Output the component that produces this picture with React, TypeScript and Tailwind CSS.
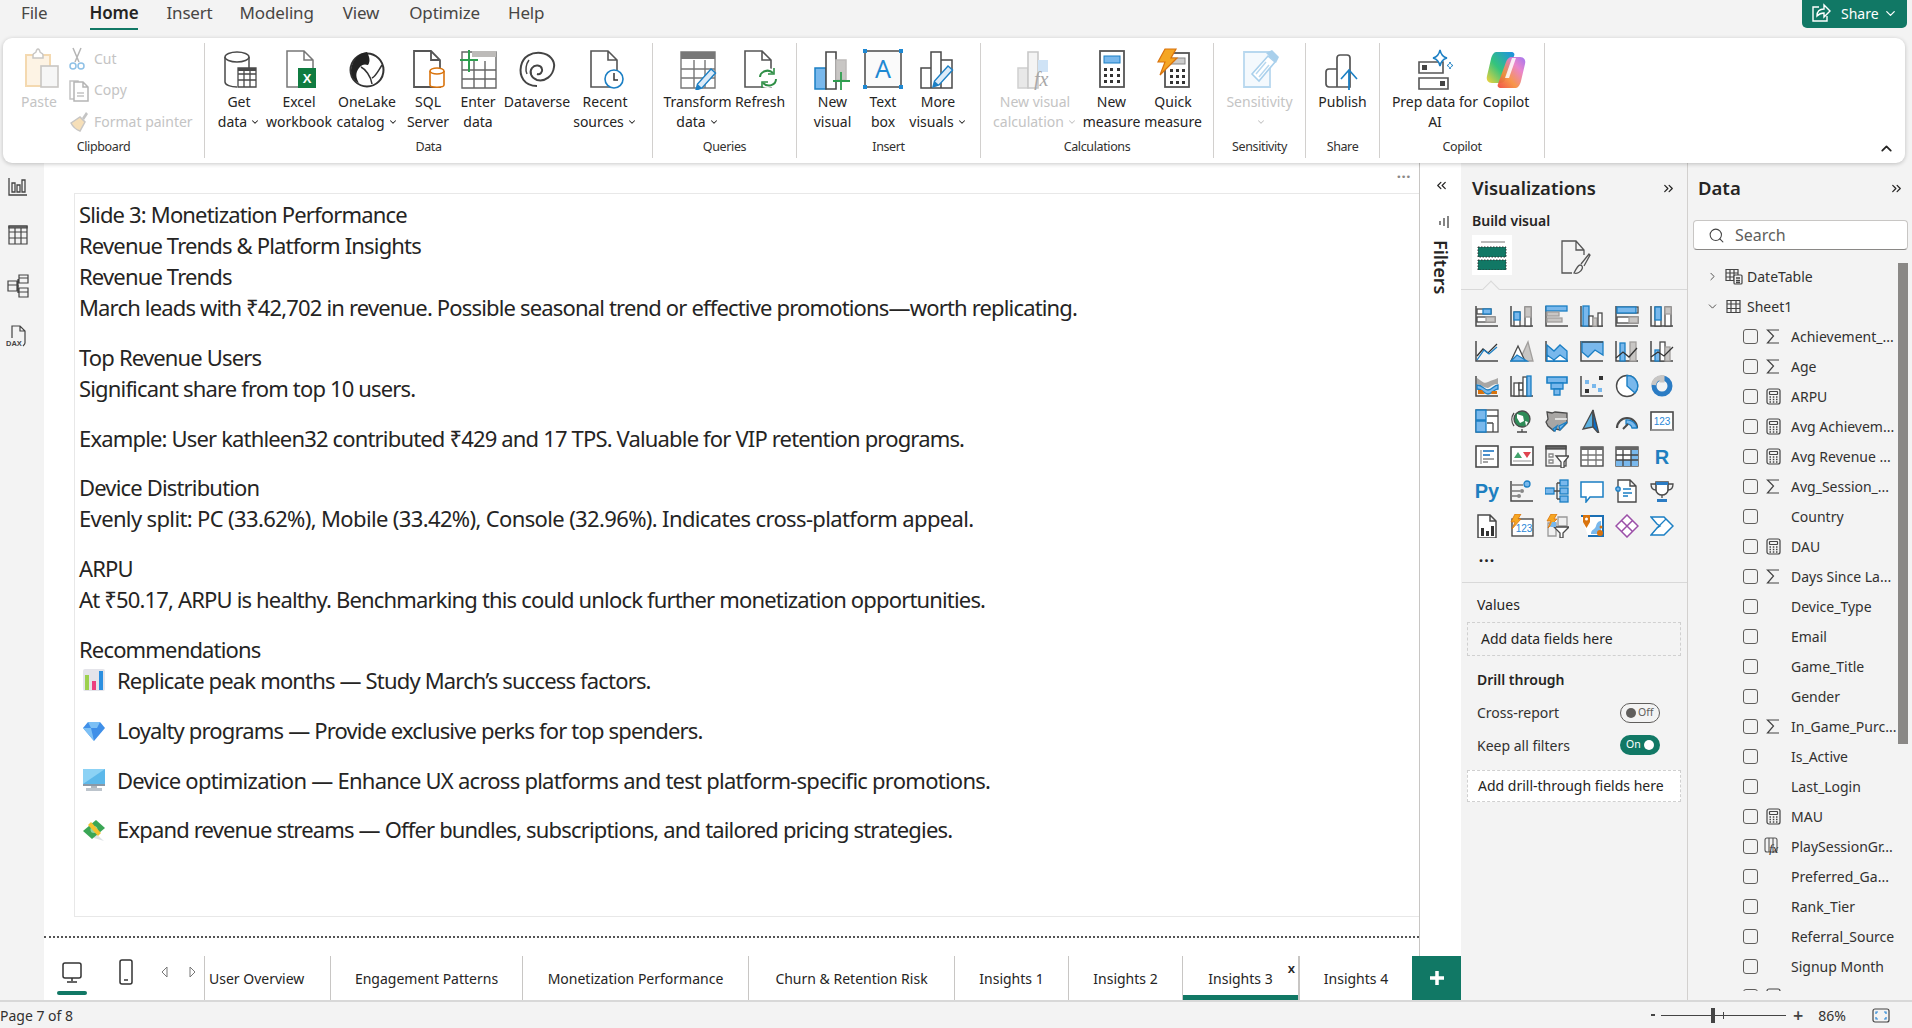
import type { ReactNode } from 'react'
import { ChevronDown, ChevronRight, ChevronUp, ChevronsLeft, ChevronsRight, Search } from 'lucide-react'

const D = '#4a4a4a'
const B = '#1b7fc4'
const LB = '#79b8ec'
const G = '#bdbbb9'

function Ic({ w = 40, h = 42, vb, children }: { w?: number; h?: number; vb?: string; children: ReactNode }) {
  return (
    <svg width={w} height={h} viewBox={vb ?? `0 0 ${w} ${h}`} fill="none" strokeWidth={1.5} className="shrink-0">
      {children}
    </svg>
  )
}

const pagePath = (x: number, y: number, w: number, h: number, f = 9) =>
  `M${x} ${y}h${w - f}l${f} ${f}v${h - f}h-${w}zM${x + w - f} ${y}v${f}h${f}`

function Pencil({ x = 0, y = 0 }: { x?: number; y?: number }) {
  return (
    <g transform={`translate(${x} ${y})`}>
      <path d="M2 24l1.5-6L17 3l4.5 4L8 22z" fill="#dcebf8" stroke={B} strokeWidth="1.4" />
      <path d="M2 24l1.5-6 4.5 4z" fill={B} />
    </g>
  )
}

const ribbonIcons: Record<string, ReactNode> = {
  getData: (
    <Ic>
      <path d="M6 9v25c0 3 6 5 12 5" stroke={D} />
      <path d="M30 9v11" stroke={D} />
      <ellipse cx="18" cy="9" rx="12" ry="5" fill="#fff" stroke={D} />
      <path d="M19 20h18v19H19zM19 26h18M19 32h18M25 20v19M31 20v19" fill="#fff" stroke={D} strokeWidth="1.3" />
      <path d="M19 20h18v3H19z" fill={D} />
    </Ic>
  ),
  excel: (
    <Ic>
      <path d={pagePath(8, 3, 26, 36)} stroke="#777" fill="#fff" />
      <rect x="19" y="20" width="18" height="20" fill="#107c41" />
      <text x="28" y="35" textAnchor="middle" fontSize="13" fontWeight="700" fill="#fff" fontFamily="Liberation Sans">X</text>
    </Ic>
  ),
  onelake: (
    <Ic>
      <circle cx="20" cy="22" r="16.5" stroke="#333" strokeWidth="2" fill="#fff" />
      <path d="M20 4c-8 1-15 8-16 18 0 6 3 11 8 13-3-5-4-10 0-15 3-4 6-4 9-3 3-4 1-9-1-13z" fill="#222" />
      <path d="M14 19c4 2 10 9 11 17M35 17c-4 6-6 11-10 13" stroke="#333" />
    </Ic>
  ),
  sql: (
    <Ic>
      <path d={pagePath(6, 3, 26, 36)} stroke="#555" strokeWidth="1.8" fill="#fff" />
      <path d="M22 23v14c0 3 14 3 14 0V23" fill="#fff" stroke="#d9730d" strokeWidth="1.6" />
      <ellipse cx="29" cy="23" rx="7" ry="3" fill="#fff" stroke="#d9730d" strokeWidth="1.6" />
    </Ic>
  ),
  enter: (
    <Ic>
      <path d="M4 4h34v36H4zM4 22h34M4 31h34M16 13v27M27 13v27" stroke="#666" strokeWidth="1.4" fill="#fff" />
      <rect x="14" y="3" width="24" height="6" fill="#bdbbb9" />
      <path d="M2 12h18M11 2v22" stroke="#2e9e4f" strokeWidth="2" />
    </Ic>
  ),
  dataverse: (
    <Ic>
      <path d="M20 38C7 38 2 28 4 18 6 8 15 4 24 5c9 1 14 8 13 14-1 9-9 15-17 13-6-2-8-8-5-12 3-4 9-3 10 1 1 3-2 6-5 5" stroke="#444" strokeWidth="2" />
      <path d="M12 12c-3 4-4 10-2 14" stroke="#444" />
    </Ic>
  ),
  recent: (
    <Ic>
      <path d={pagePath(6, 3, 26, 36)} stroke="#555" strokeWidth="1.6" fill="#fff" />
      <circle cx="29" cy="31" r="9" fill="#fff" stroke={B} strokeWidth="1.6" />
      <path d="M29 25v7h4" stroke="#333" />
    </Ic>
  ),
  transform: (
    <Ic>
      <path d="M3 4h34v36H3zM3 21h34M3 30h34M16 12v28M27 12v28" stroke="#777" strokeWidth="1.4" fill="#fff" />
      <rect x="3" y="4" width="34" height="7" fill="#777" />
      <Pencil x={16} y={18} />
    </Ic>
  ),
  refresh: (
    <Ic>
      <path d={pagePath(5, 3, 26, 36)} stroke="#555" strokeWidth="1.6" fill="#fff" />
      <circle cx="28" cy="30" r="10" fill="#fff" />
      <path d="M20 29c0-5 8-9 13-4M36 31c0 6-8 9-13 4" stroke="#2f8f46" strokeWidth="2" />
      <path d="M34 20v6h-6M22 40v-6h6" stroke="#2f8f46" strokeWidth="1.6" />
    </Ic>
  ),
  newVisual: (
    <Ic>
      <rect x="2" y="20" width="11" height="21" fill={LB} stroke={B} />
      <path d="M13 41V4h10v37z" fill="#fff" stroke={D} strokeWidth="1.6" />
      <path d="M23 12h10v20H23z" fill="#c8c6c4" stroke={G} />
      <path d="M28 24v18M20 33h17" stroke="#2e9e4f" strokeWidth="1.8" />
    </Ic>
  ),
  textBox: (
    <Ic>
      <rect x="2" y="3" width="36" height="36" fill="#fafafa" stroke={D} strokeWidth="1.5" />
      <rect x="0" y="1" width="4" height="4" fill="#1e88d2" />
      <rect x="36" y="1" width="4" height="4" fill="#1e88d2" />
      <rect x="0" y="37" width="4" height="4" fill="#1e88d2" />
      <rect x="36" y="37" width="4" height="4" fill="#1e88d2" />
      <text x="20" y="30" textAnchor="middle" fontSize="25" fill="#1e88d2" fontFamily="Noto Sans">A</text>
    </Ic>
  ),
  moreVisuals: (
    <Ic>
      <path d="M3 20h10v20H3zM13 40V4h10v36zM23 12h11v28H23z" stroke={D} strokeWidth="1.5" fill="#fff" />
      <Pencil x={13} y={15} />
    </Ic>
  ),
  visualCalc: (
    <Ic>
      <rect x="3" y="20" width="10" height="20" fill="#e8e8e8" stroke="#d0d0d0" />
      <path d="M13 40V4h10v36z" fill="#f4f4f4" stroke="#c8c8c8" strokeWidth="1.6" />
      <rect x="23" y="12" width="10" height="12" fill="#cfe3f6" />
      <text x="19" y="38" fontSize="20" fontStyle="italic" fill="#a8a8a8" fontFamily="Liberation Serif">fx</text>
    </Ic>
  ),
  measure: (
    <Ic>
      <rect x="8" y="3" width="24" height="36" fill="#fff" stroke="#555" strokeWidth="1.8" />
      <rect x="12" y="8" width="16" height="7" fill={LB} stroke={B} strokeWidth="1" />
      <path d="M12 20h3v3h-3zM18 20h3v3h-3zM25 20h3v3h-3zM12 26h3v3h-3zM18 26h3v3h-3zM25 26h3v3h-3zM12 32h3v3h-3zM18 32h3v3h-3zM25 32h3v3h-3z" fill="#333" />
    </Ic>
  ),
  quick: (
    <Ic>
      <rect x="12" y="5" width="24" height="34" fill="#fff" stroke="#555" strokeWidth="1.8" />
      <rect x="17" y="10" width="15" height="6" fill="#ccc" stroke="#888" strokeWidth="1" />
      <path d="M17 21h3v3h-3zM23 21h3v3h-3zM29 21h3v3h-3zM17 27h3v3h-3zM23 27h3v3h-3zM29 27h3v3h-3zM17 33h3v3h-3zM23 33h3v3h-3zM29 33h3v3h-3z" fill="#333" />
      <path d="M12 1h11l-5 9h6L7 27l5-13H5z" fill="#f5a623" stroke="#d9730d" strokeWidth="1.2" />
    </Ic>
  ),
  sensitivity: (
    <Ic>
      <path d="M4 4h26v35H4z" fill="#f4f9fd" stroke="#b8d8ef" strokeWidth="1.8" />
      <path d="M12 26L28 8l7 6-16 19z" fill="#fff" stroke="#a9d0ec" strokeWidth="1.6" />
      <path d="M26 5l6-3 7 7-3 6z" fill="#a9d0ec" />
      <path d="M16 26l10-12M19 29l10-12" stroke="#b8d8ef" />
    </Ic>
  ),
  publish: (
    <Ic>
      <path d="M3 24a3 3 0 013-3h8v18H6a3 3 0 01-3-3zM14 39V10a3 3 0 013-3h7a3 3 0 013 3v29z" stroke="#555" strokeWidth="1.7" fill="#fff" />
      <path d="M26 42V22" stroke={B} strokeWidth="1.8" />
      <path d="M18 31l8-9 8 9" stroke={B} strokeWidth="1.6" />
    </Ic>
  ),
  prep: (
    <Ic>
      <path d="M4 14h24v11H4zM4 30h29v11H4z" stroke="#555" strokeWidth="1.6" fill="#fff" />
      <rect x="7" y="17" width="5" height="5" fill="#444" />
      <rect x="25" y="33" width="5" height="5" fill="#444" />
      <path d="M25 2c1 5 3 7 7 8-4 1-6 3-7 8-1-5-3-7-7-8 4-1 6-3 7-8z" fill="#fff" stroke={B} />
      <path d="M35 14c.5 2 1.5 3 3 3.5-1.5.5-2.5 1.5-3 3.5-.5-2-1.5-3-3-3.5 1.5-.5 2.5-1.5 3-3.5z" fill="#fff" stroke={B} strokeWidth="1" />
    </Ic>
  ),
  copilot: (
    <Ic>
      <defs>
        <linearGradient id="cpA" x1="0" y1="1" x2="1" y2="0">
          <stop offset="0" stopColor="#f7d33a" />
          <stop offset="0.45" stopColor="#35c47c" />
          <stop offset="1" stopColor="#1d8ee6" />
        </linearGradient>
        <linearGradient id="cpB" x1="0" y1="1" x2="1" y2="0">
          <stop offset="0" stopColor="#f0453c" />
          <stop offset="0.35" stopColor="#f78f3c" />
          <stop offset="0.7" stopColor="#e87cc8" />
          <stop offset="1" stopColor="#9a6cf0" />
        </linearGradient>
      </defs>
      <path d="M10 4h15c3 0 4 2 3 4l-8 22c-1 3-3 5-6 5H6c-4 0-6-3-5-7l4-17c1-4 3-7 5-7z" fill="url(#cpA)" />
      <path d="M30 40H15c-3 0-4-2-3-4l8-22c1-3 3-5 6-5h8c4 0 6 3 5 7l-4 17c-1 4-3 7-5 7z" fill="url(#cpB)" opacity="0.93" />
      <path d="M19 30l7-20h4l-7 20z" fill="#fff" opacity="0.85" />
    </Ic>
  ),
}

function RibbonBtn({ w, icon, lines, caret, off }: { w: number; icon: string; lines: string[]; caret?: boolean; off?: boolean }) {
  return (
    <div className={`flex flex-col items-center shrink-0 ${off ? 'text-[#c4c4c4]' : 'text-[#252423]'}`} style={{ width: w }}>
      <div className="h-[44px] flex items-start justify-center">{ribbonIcons[icon]}</div>
      {lines.map((l, i) => (
        <div key={i} className="h-[20px] leading-[20px] whitespace-nowrap flex items-center">
          {l}
          {caret && i === lines.length - 1 && <ChevronDown size={10} strokeWidth={2.5} className="ml-[3px]" />}
        </div>
      ))}
    </div>
  )
}

function Group({ w, pl = 0, label, children }: { w: number; pl?: number; label: string; children: ReactNode }) {
  return (
    <div className="flex flex-col shrink-0 border-r border-[#d2d0ce] h-[115px] pt-[5px]" style={{ width: w }}>
      <div className="flex h-[89px]" style={{ paddingLeft: pl }}>
        {children}
      </div>
      <div className="h-[20px] leading-[20px] text-center text-[12.5px] tracking-[-0.03em] text-[#323130]">{label}</div>
    </div>
  )
}

function Ribbon() {
  return (
    <div className="mx-[3px] h-[125px] w-[1902px] bg-white rounded-[9px] shadow-[0_1px_4px_rgba(0,0,0,0.22)] flex py-[5px] relative z-10 text-[14px]">
      <Group w={202} pl={15} label="Clipboard">
        <div className="w-[42px] flex flex-col items-center text-[#c4c4c4]">
          <div className="h-[44px] ml-[5px]">
            <Ic w={36} h={40}>
              <path d="M2 7h24v31H2z" fill="#fdf3e4" stroke="#f4d9b0" strokeWidth="2" />
              <path d="M9 7c0-2 3-2 3-3s1-3 2-3 2 2 2 3 3 1 3 3v3H9z" fill="#fff" stroke="#c8c6c4" />
              <rect x="17" y="18" width="17" height="21" fill="#f6f6f6" stroke="#c8c6c4" strokeWidth="1.6" />
            </Ic>
          </div>
          <div className="h-[20px] leading-[20px]">Paste</div>
        </div>
        <div className="ml-[9px] flex flex-col text-[#c4c4c4] -mt-[5px]">
          <div className="h-[33px] flex items-center gap-[8px]">
            <Ic w={16} h={24}>
              <path d="M4 1l6 14M12 1L6 15" stroke="#b5b5b5" />
              <circle cx="4" cy="19" r="3" stroke="#8fc1e6" />
              <circle cx="12" cy="19" r="3" stroke="#8fc1e6" />
            </Ic>
            <span className="ml-[1px]">Cut</span>
          </div>
          <div className="h-[33px] flex items-center gap-[8px]">
            <Ic w={20} h={24}>
              <path d="M1 3h8v18H1z" stroke="#c4c4c4" />
              <path d={pagePath(5, 4, 14, 19, 5)} stroke="#b5b5b5" fill="#fff" />
              <path d="M8 15h7M8 18h7" stroke="#c4c4c4" />
            </Ic>
            <span className="-ml-[3px]">Copy</span>
          </div>
          <div className="h-[33px] flex items-center gap-[6px]">
            <Ic w={20} h={22}>
              <path d="M13 8l4-6 2 2-4 6z" fill="#c4c4c4" />
              <path d="M2 13l9-6 5 5-5 9c-3-1-7-4-9-8z" fill="#f6dfb8" stroke="#c8c6c4" />
            </Ic>
            <span className="-ml-[1px] whitespace-nowrap">Format painter</span>
          </div>
        </div>
      </Group>
      <Group w={448} pl={7} label="Data">
        <RibbonBtn w={54} icon="getData" lines={['Get', 'data']} caret />
        <RibbonBtn w={66} icon="excel" lines={['Excel', 'workbook']} />
        <RibbonBtn w={70} icon="onelake" lines={['OneLake', 'catalog']} caret />
        <RibbonBtn w={52} icon="sql" lines={['SQL', 'Server']} />
        <RibbonBtn w={48} icon="enter" lines={['Enter', 'data']} />
        <RibbonBtn w={70} icon="dataverse" lines={['Dataverse']} />
        <RibbonBtn w={66} icon="recent" lines={['Recent', 'sources']} caret />
      </Group>
      <Group w={144} pl={9} label="Queries">
        <RibbonBtn w={71} icon="transform" lines={['Transform', 'data']} caret />
        <RibbonBtn w={54} icon="refresh" lines={['Refresh']} />
      </Group>
      <Group w={184} pl={10} label="Insert">
        <RibbonBtn w={51} icon="newVisual" lines={['New', 'visual']} />
        <RibbonBtn w={50} icon="textBox" lines={['Text', 'box']} />
        <RibbonBtn w={60} icon="moreVisuals" lines={['More', 'visuals']} caret />
      </Group>
      <Group w={233} pl={9} label="Calculations">
        <RibbonBtn w={90} icon="visualCalc" lines={['New visual', 'calculation']} caret off />
        <RibbonBtn w={63} icon="measure" lines={['New', 'measure']} />
        <RibbonBtn w={60} icon="quick" lines={['Quick', 'measure']} />
      </Group>
      <Group w={92} label="Sensitivity">
        <RibbonBtn w={91} icon="sensitivity" lines={['Sensitivity', '']} caret off />
      </Group>
      <Group w={74} label="Share">
        <RibbonBtn w={73} icon="publish" lines={['Publish']} />
      </Group>
      <Group w={165} pl={9} label="Copilot">
        <RibbonBtn w={92} icon="prep" lines={['Prep data for', 'AI']} />
        <RibbonBtn w={50} icon="copilot" lines={['Copilot']} />
      </Group>
      <div className="flex-1 flex items-end justify-end pr-[10px] pb-[1px]">
        <ChevronUp size={17} strokeWidth={2.5} className="text-[#252423]" />
      </div>
    </div>
  )
}

function TopBar() {
  const tabs = [
    ['File', 21, 0],
    ['Home', 42, 1],
    ['Insert', 28, 0],
    ['Modeling', 27, 0],
    ['View', 29, 0],
    ['Optimize', 30, 0],
    ['Help', 28, 0],
  ] as const
  return (
    <div className="h-[38px] flex justify-between">
      <div className="flex">
        {tabs.map(([t, ml, on]) => (
          <div
            key={t}
            style={{ marginLeft: ml }}
            className={`h-[30px] pt-[1px] leading-[24px] text-[17px] tracking-[-0.01em] border-b-[2px] ${on ? 'font-semibold border-[#117865] text-[#252423]' : 'border-transparent text-[#484644]'}`}
          >
            {t}
          </div>
        ))}
      </div>
      <div className="mr-[5px] w-[105px] h-[28px] pb-[2px] bg-[#117865] rounded-b-[5px] text-white text-[14px] flex items-center pl-[9px]">
        <svg width="20" height="20" viewBox="0 0 20 20" fill="none" stroke="#fff" strokeWidth="1.4">
          <path d="M8 4H2v14h14v-5" />
          <path d="M6 13c0-5 3-7 7-7V2l6 6-6 6v-4c-3 0-5 1-7 3z" />
        </svg>
        <span className="ml-[10px]">Share</span>
        <ChevronDown size={15} className="ml-[4px]" />
      </div>
    </div>
  )
}

function Rail() {
  return (
    <div className="w-[44px] shrink-0 flex flex-col items-center pt-[14px] pr-[8px] gap-[27px]">
      <svg width="20" height="20" viewBox="0 0 20 20" fill="none" stroke="#444" strokeWidth="1.3">
        <path d="M1 1v17h18M4 15V6h3v9zM9 15V8h3v7zM14 15V3h3v12z" />
      </svg>
      <svg width="22" height="22" viewBox="0 0 22 22" fill="none" stroke="#444" strokeWidth="1.2">
        <path d="M2 2h18v18H2zM2 8h18M2 14h18M8 4v16M14 4v16" />
        <path d="M2 2h18v2H2z" fill="#777" />
      </svg>
      <svg width="24" height="26" viewBox="0 0 24 26" fill="none" stroke="#444" strokeWidth="1.2">
        <path d="M2 8h9v10H2zM2 12h9M13 2h9v8h-9zM13 5h9M13 15h9v9h-9zM13 19h9M11 13h2M12 6v14" />
      </svg>
      <svg width="24" height="24" viewBox="0 0 24 24" fill="none" stroke="#444" strokeWidth="1.2" className="-mt-[2px]">
        <path d="M6 14V2h8l5 5v12c0 1-1 2-2 3M14 2v5h5" />
        <text x="0" y="22" fontSize="7.5" fontWeight="700" fill="#444" stroke="none" fontFamily="Liberation Sans">DAX</text>
      </svg>
    </div>
  )
}

function Chart({ children }: { children: ReactNode }) {
  return (
    <svg width="24" height="24" viewBox="0 0 24 24" fill="none" stroke={D} strokeWidth="1.3">
      {children}
    </svg>
  )
}

const axis = <path d="M1 2v20h22" strokeWidth="1.5" />
const blue = { fill: LB, stroke: B }
const gray = { fill: '#c8c6c4', stroke: '#a19f9d' }

function vizIcons(): ReactNode[] {
  return [
    <>{axis}<rect x="2" y="5" width="14" height="5" fill="#fff" /><rect x="8" y="5" width="8" height="5" {...blue} /><rect x="2" y="13" width="18" height="5" fill="#fff" /><rect x="11" y="13" width="9" height="5" {...gray} /></>,
    <>{axis}<rect x="4" y="8" width="6" height="14" fill="#fff" /><rect x="4" y="8" width="6" height="8" {...blue} /><rect x="15" y="3" width="6" height="19" fill="#fff" /><rect x="15" y="3" width="6" height="10" {...gray} /></>,
    <>{axis}<rect x="1" y="2" width="21" height="5" {...blue} /><rect x="2" y="8" width="12" height="4" {...gray} /><rect x="2" y="14" width="15" height="4" {...gray} /></>,
    <>{axis}<rect x="3" y="2" width="6" height="20" {...blue} /><rect x="9" y="12" width="4" height="10" fill="#fff" /><rect x="13" y="14" width="4" height="8" {...gray} /><rect x="18" y="9" width="4" height="13" fill="#fff" /></>,
    <>{axis}<rect x="2" y="3" width="21" height="6" fill="#fff" /><rect x="2" y="3" width="19" height="6" {...blue} /><rect x="2" y="13" width="21" height="6" fill="#fff" /><rect x="14" y="13" width="9" height="6" {...gray} /></>,
    <>{axis}<rect x="5" y="3" width="6" height="19" fill="#fff" /><rect x="5" y="3" width="6" height="13" {...blue} /><rect x="15" y="3" width="6" height="19" fill="#fff" /><rect x="15" y="3" width="6" height="7" {...gray} /></>,

    <>{axis}<path d="M2 17l6-7 5 4 9-9" stroke="#333" /><path d="M2 21l7-10 5 4 8-7" stroke={B} /></>,
    <><path d="M1 22l6-12 5 6 6-13 5 19z" {...gray} /><path d="M1 22L8 7l7 15" fill="#fff" stroke={D} /><path d="M1 22l6-6 5 3 5 3z" fill={LB} stroke={B} /></>,
    <>{axis}<path d="M2 6l7 6 6-6 7 6v10H2z" {...blue} /><path d="M2 16l7 5 6-5 7 5v1H2z" fill="#fff" stroke={B} /></>,
    <>{axis}<path d="M2 3h21v13l-8-5-7 7-6-5z" {...blue} /><path d="M2 3h21" stroke={D} /></>,
    <>{axis}<rect x="5" y="4" width="5" height="18" {...blue} /><rect x="15" y="3" width="6" height="19" {...gray} /><path d="M1 19l7-6 6 5 8-9" stroke="#333" /></>,
    <>{axis}<rect x="5" y="11" width="5" height="11" {...blue} /><rect x="10" y="3" width="5" height="19" fill="#fff" /><rect x="15" y="8" width="5" height="14" {...gray} /><path d="M1 18l7-5 6 4 9-9" stroke="#333" /></>,

    <>{axis}<path d="M2 4c6 4 7 6 11 4 4-2 6-2 10-4v6c-5 0-6 2-10 4-4 0-6-3-11-4z" fill="#a8a6a4" stroke="none" /><path d="M2 11c6 0 7 5 11 5 4 0 6-5 10-5v4c-4 0-6 5-10 5s-5-5-11-5z" fill={LB} stroke={B} /><path d="M3 16h4l3 4H3zM17 17h5v3h-6z" fill="#d9730d" stroke="none" /></>,
    <>{axis}<rect x="4" y="9" width="5" height="13" fill="#fff" /><path d="M9 9h4v7H9z" fill="#fff" /><rect x="13" y="3" width="4" height="19" fill="#fff" /><rect x="17" y="2" width="4" height="20" {...blue} /></>,
    <><path d="M2 3h20v6H2z" {...blue} strokeWidth="1.6" /><path d="M6 9h12v6H6z" {...blue} /><path d="M9 15h6v6H9z" {...blue} /></>,
    <>{axis}<rect x="5" y="15" width="4" height="4" fill="#333" stroke="none" /><rect x="5" y="6" width="4" height="4" fill={LB} stroke="none" /><rect x="12" y="10" width="4" height="4" fill={LB} stroke="none" /><rect x="19" y="2" width="4" height="4" fill="#333" stroke="none" /><rect x="18" y="14" width="4" height="4" fill={LB} stroke="none" /></>,
    <><circle cx="12" cy="12" r="10.5" fill="#fff" strokeWidth="1.4" /><path d="M12 12V1.5A10.5 10.5 0 0120 19z" {...blue} strokeWidth="1.4" /></>,
    <><circle cx="12" cy="12" r="8" stroke="#2b7cc4" strokeWidth="5" /><path d="M3.5 11A8.6 8.6 0 0112 3.5v5" stroke="#c8c6c4" strokeWidth="5" /></>,

    <><rect x="1" y="1" width="22" height="22" fill="#fff" stroke={D} /><path d="M1 1h10v10H1zM1 12h10v11H1z" {...blue} /><path d="M12 7h11M12 14h6M18 14v9" /></>,
    <><circle cx="12" cy="10" r="8" fill="#2e8b57" stroke={D} /><path d="M7 5l6 2 1 5-4 2-3-5zM15 12l3 1-2 4z" fill="#fff" stroke="none" /><path d="M4 4a11 11 0 000 13M12 20v3M7 23h10" /></>,
    <><path d="M2 3l5 1 3-1 12 1v10l-7 7-4-1-2 2-6-5-2-4 2-3z" fill="#a8a6a4" stroke={D} /><path d="M22 13l-8 4 1 4zM12 17l-4 3 2 2z" {...blue} /><path d="M10 10h12" stroke="#fff" /></>,
    <><path d="M13 1L3 20l10-2z" fill="#5bb0e0" /><path d="M13 1l6 24-6-7z" fill="#0a6cc4" /></>,
    <><path d="M2 19a10 10 0 0120 0" stroke={D} strokeWidth="2.2" /><path d="M11 11a10 10 0 0111 8h-5a5 5 0 00-6-4z" {...blue} /><path d="M8 20l5-5" strokeWidth="2" /></>,
    <><rect x="1" y="3" width="22" height="18" fill="#fff" stroke={D} strokeWidth="1.6" /><text x="12" y="16" textAnchor="middle" fontSize="10" fill="#2b88d8" stroke="none" fontFamily="Liberation Sans">123</text><path d="M1 21h22" stroke="#aaa" /></>,

    <><rect x="1" y="2" width="22" height="21" fill="#fff" stroke={D} strokeWidth="1.6" /><path d="M6 6v14" stroke="#999" /><path d="M8 7h11M8 11h7" stroke="#0f6cbd" strokeWidth="1.6" /><path d="M8 15h11M8 18h5" stroke="#888" /></>,
    <><rect x="1" y="3" width="22" height="18" fill="#fff" stroke={D} strokeWidth="1.6" /><path d="M4 14l4-6 4 6z" fill="#43a36c" stroke="none" /><path d="M13 8h8l-4 6z" fill="#e0454f" stroke="none" /><path d="M3 17h18" stroke="#aaa" /></>,
    <><rect x="1" y="2" width="20" height="20" fill="#f5f5f5" stroke={D} /><rect x="1" y="2" width="20" height="3" fill="#666" /><path d="M4 10h4v3H4zM4 16h4v3H4z" stroke="#888" fill="#fff" /><path d="M11 12h13l-5 6v6h-3v-6z" fill="#fff" stroke={D} /></>,
    <><rect x="1" y="3" width="22" height="19" fill="#fff" stroke={D} strokeWidth="1.4" /><rect x="1" y="3" width="22" height="3" fill="#666" stroke="none" /><path d="M1 11h22M1 16h22M8 6v16M16 6v16" stroke="#777" /></>,
    <><rect x="1" y="3" width="22" height="19" fill="#fff" stroke={D} strokeWidth="1.4" /><rect x="1" y="3" width="22" height="3" fill="#666" stroke="none" /><path d="M16 6h7v16h-7zM1 16h22v6H1z" fill={LB} stroke="none" /><path d="M1 11h22M1 16h22M8 6v16M16 6v16" stroke="#444" /></>,
    <text x="12" y="20" textAnchor="middle" fontSize="20" fontWeight="700" fill="#1e7fc0" stroke="none" fontFamily="Liberation Sans">R</text>,

    <text x="12" y="19" textAnchor="middle" fontSize="20" fontWeight="700" fill="#1e7fc0" stroke="none" fontFamily="Liberation Sans">Py</text>,
    <><path d="M1 2v20h22" strokeWidth="1.5" /><path d="M1 6h12M1 12h9M1 17h7" stroke="#777" /><circle cx="17" cy="5" r="3" {...blue} /><circle cx="12" cy="12" r="2" fill="#888" stroke="none" /><circle cx="9" cy="17" r="2" fill="#888" stroke="none" /></>,
    <><rect x="0" y="9" width="9" height="6" {...blue} /><rect x="15" y="1" width="8" height="6" {...blue} /><rect x="15" y="9" width="8" height="6" {...blue} /><rect x="15" y="17" width="8" height="6" {...blue} /><path d="M9 12h6M12 4v16M12 4h3M12 20h3" /></>,
    <><path d="M1 3h22v15H10l-4 5v-5H1z" fill="#fff" stroke={B} strokeWidth="1.5" /></>,
    <><path d={pagePath(3, 1, 18, 22, 6)} fill="#fff" strokeWidth="1.4" /><circle cx="3" cy="10" r="2.2" {...blue} /><path d="M8 10h8M8 14h9M8 17h5" stroke={B} /></>,
    <><path d="M6 3h12v8c0 3-3 5-6 5s-6-2-6-5z" fill="#fff" stroke={D} strokeWidth="1.6" /><path d="M6 3h12v3H6z" fill="#2b7cc4" stroke="none" /><path d="M6 5H1c0 4 2 6 5 6M18 5h5c0 4-2 6-5 6M12 16v3" /><path d="M7 23v-3h10v3z" fill="#2b7cc4" stroke="none" /></>,

    <><path d={pagePath(3, 1, 18, 23, 6)} fill="#fff" strokeWidth="1.5" /><path d="M6 14h3v8H6zM11 17h3v5h-3zM16 12h3v10h-3z" fill="#333" stroke="none" /></>,
    <><rect x="2" y="5" width="21" height="17" fill="#fff" stroke={D} strokeWidth="1.4" /><text x="14" y="18" textAnchor="middle" fontSize="10" fill="#2b88d8" stroke="none" fontFamily="Liberation Sans">123</text><path d="M5 0h6L8 5h3L2 15l3-7H1z" fill="#f5a623" stroke="#d9730d" strokeWidth="0.8" /></>,
    <><path d="M3 9h8v13H3zM13 3h9v9h-9z" fill="#f0f0f0" stroke="#999" /><path d="M9 13h15l-6 6v5h-3v-5z" fill="#fff" stroke={D} /><path d="M6 0h6L9 5h3L3 14l3-7H2z" fill="#f5a623" stroke="#d9730d" strokeWidth="0.8" /><path d="M7 8h4v5H5z" fill={LB} stroke="none" /></>,
    <><path d="M1 2h22v20H8" fill="#fff" stroke="#1b6fb4" strokeWidth="2" /><path d="M11 20c0-5 4-4 5-8s3-5 5-5v13z" fill={LB} stroke="none" /><path d="M3 1h7v7l-3.5 6L3 8z" fill="#d9730d" stroke="none" /><circle cx="6.5" cy="5" r="1.5" fill="#fff" stroke="none" /><circle cx="20" cy="19" r="3" fill="#d9730d" stroke="none" /><circle cx="21" cy="13" r="1.5" fill="#d9730d" stroke="none" /></>,
    <><path d="M12 1l11 11-11 11L1 12zM7 7l10 10M17 7L7 17" stroke="#9b4fa8" strokeWidth="1.5" fill="#fff" /></>,
    <><path d="M1 3h13l9 9-9 9H1l6-7 3-2-3-2z" fill="#fff" stroke="#1b7fc4" strokeWidth="1.5" /><path d="M7 14l9-9" stroke="#1b7fc4" /></>,
  ]
}

function VizGrid() {
  const icons = vizIcons()
  return (
    <div className="grid grid-cols-[repeat(6,24px)] gap-[11px] pl-[13px] pt-[14px]">
      {icons.map((ic, i) => (
        <div key={i} className="w-[24px] h-[24px]">
          <Chart>{ic}</Chart>
        </div>
      ))}
      <div className="text-[#252423] h-[24px] leading-[14px] text-[16px] font-bold tracking-[1px] text-center">...</div>
    </div>
  )
}

function Toggle({ on }: { on?: boolean }) {
  if (on)
    return (
      <div className="w-[40px] h-[20px] rounded-full bg-[#117865] flex items-center justify-between px-[6px] text-white text-[10.5px]">
        On
        <span className="w-[10px] h-[10px] rounded-full bg-white" />
      </div>
    )
  return (
    <div className="w-[40px] h-[20px] rounded-full border border-[#605e5c] flex items-center px-[5px] text-[#605e5c] text-[10.5px] gap-[2px]">
      <span className="w-[10px] h-[10px] rounded-full bg-[#605e5c]" />
      Off
    </div>
  )
}

function VizPane() {
  return (
    <div className="w-[227px] shrink-0 border-r border-[#d2d0ce] flex flex-col">
      <div className="h-[50px] flex items-center justify-between pl-[11px] pr-[11px]">
        <span className="text-[18.5px] font-semibold text-[#252423]">Visualizations</span>
        <ChevronsRight size={15} className="text-[#252423]" />
      </div>
      <div className="pl-[11px] h-[22px] text-[14px] font-semibold text-[#252423] leading-[16px]">Build visual</div>
      <div className="flex h-[55px] pl-[11px] relative border-b border-[#d8d8d8]">
        <div className="w-[40px] h-[40px] bg-white flex items-center justify-center">
          <svg width="30" height="30" viewBox="0 0 30 30" fill="none">
            <path d="M4 2h24" stroke="#777" />
            <rect x="1" y="7" width="28" height="10" fill="#117865" stroke="#333" strokeDasharray="1.5 1.5" />
            <rect x="1" y="20" width="28" height="10" fill="#117865" stroke="#333" strokeDasharray="1.5 1.5" />
          </svg>
        </div>
        <div className="ml-[48px] pt-[4px]">
          <svg width="32" height="36" viewBox="0 0 32 36" fill="none" stroke="#555" strokeWidth="1.3">
            <path d="M12 34H2V2h14l8 9v5M16 2v9h8" />
            <path d="M14 34c2-4 4-8 6-8s3 2 2 4c-1 3-5 5-8 4zM21 25l8-10 1 1-6 11" />
          </svg>
        </div>
        <div className="absolute left-[24px] -bottom-[6px] w-[12px] h-[12px] rotate-45 bg-[#f3f3f3] border-l border-t border-[#d8d8d8]" />
      </div>
      <div className="h-[293px] border-b border-[#d8d8d8] ml-[1px]">
        <VizGrid />
      </div>
      <div className="pl-[16px] pt-[12px] h-[27px] text-[14px] text-[#252423] leading-[19px] mb-[12px]">Values</div>
      <div className="mx-[6px] h-[34px] border border-dashed border-[#d0d0d0] pl-[13px] leading-[32px] text-[14px] text-[#252423]">Add data fields here</div>
      <div className="pl-[16px] pt-[14px] h-[38px] text-[14px] font-semibold text-[#252423] leading-[20px]">Drill through</div>
      <div className="pl-[16px] pr-[27px] h-[31px] flex items-center justify-between text-[14px] text-[#323130] mt-[3px]">
        Cross-report <Toggle />
      </div>
      <div className="pl-[16px] pr-[27px] h-[34px] flex items-center justify-between text-[14px] text-[#323130]">
        Keep all filters <Toggle on />
      </div>
      <div className="mx-[6px] mt-[8px] h-[32px] bg-white border border-dashed border-[#d0d0d0] pl-[10px] leading-[30px] text-[14px] text-[#252423] whitespace-nowrap">
        Add drill-through fields here
      </div>
    </div>
  )
}

const tableIcon = (
  <svg width="17" height="17" viewBox="0 0 17 17" fill="none" stroke="#444" strokeWidth="1.2">
    <path d="M2 2.5h13v12H2zM1.5 6h14M1.5 10.5h14M6 2v13M11 2v13" />
  </svg>
)
const dateIcon = (
  <svg width="18" height="18" viewBox="0 0 18 18" fill="none" stroke="#444" strokeWidth="1.2">
    <path d="M1 2.5h12v11H1zM1 6h12M1 10h12M5 2v12M9 2v12" />
    <rect x="9" y="8" width="8" height="9" rx="1" fill="#f3f3f3" />
    <path d="M11 11h4M11 13.5h4M11 15.5h4" strokeWidth="1.5" />
  </svg>
)
const sigma = (
  <svg width="14" height="15" viewBox="0 0 14 15" fill="none" stroke="#444" strokeWidth="1.2">
    <path d="M13 1H1.5l6 6-6 7H13" />
  </svg>
)
const calc = (
  <svg width="15" height="17" viewBox="0 0 15 17" fill="none" stroke="#444" strokeWidth="1.2">
    <rect x="1" y="1" width="13" height="15" rx="2" />
    <rect x="3.5" y="3.5" width="8" height="3" rx="0.5" />
    <path d="M3.5 9h1.5M6.8 9h1.5M10 9h1.5M3.5 11.5h1.5M6.8 11.5h1.5M10 11.5h1.5M3.5 14h1.5M6.8 14h1.5M10 14h1.5" strokeWidth="1.4" />
  </svg>
)
const fxIcon = (
  <svg width="18" height="18" viewBox="0 0 18 18" fill="none" stroke="#555" strokeWidth="1.1">
    <rect x="1" y="1" width="12" height="14" rx="2" />
    <path d="M5 1v14M9 1v14" />
    <text x="5" y="16" fontSize="13" fontStyle="italic" fill="#333" stroke="none" fontFamily="Liberation Serif">fx</text>
  </svg>
)

const fields: [string, ReactNode][] = [
  ['Achievement_...', sigma],
  ['Age', sigma],
  ['ARPU', calc],
  ['Avg Achievem...', calc],
  ['Avg Revenue ...', calc],
  ['Avg_Session_...', sigma],
  ['Country', null],
  ['DAU', calc],
  ['Days Since La...', sigma],
  ['Device_Type', null],
  ['Email', null],
  ['Game_Title', null],
  ['Gender', null],
  ['In_Game_Purc...', sigma],
  ['Is_Active', null],
  ['Last_Login', null],
  ['MAU', calc],
  ['PlaySessionGr...', fxIcon],
  ['Preferred_Ga...', null],
  ['Rank_Tier', null],
  ['Referral_Source', null],
  ['Signup Month', null],
  ['', calc],
]

function DataPane() {
  return (
    <div className="flex-1 flex flex-col min-w-0 relative">
      <div className="h-[50px] flex items-center justify-between pl-[10px] pr-[8px]">
        <span className="text-[18.5px] font-semibold text-[#252423]">Data</span>
        <ChevronsRight size={15} className="text-[#252423]" />
      </div>
      <div className="ml-[5px] mt-[7px] w-[215px] h-[30px] bg-white border border-[#c8c6c4] border-b-[#8a8886] rounded-[4px] flex items-center pl-[14px] gap-[10px] text-[#605e5c] text-[16px]">
        <Search size={17} strokeWidth={1.5} className="text-[#444]" />
        Search
      </div>
      <div className="relative flex-1 overflow-hidden mb-[9px] mt-[11px]">
        <div className="pl-[18px] text-[14px] text-[#323130]">
          <div className="h-[30px] flex items-center">
            <ChevronRight size={13} strokeWidth={1.5} className="mr-[6px]" />
            {dateIcon}
            <span className="ml-[4px]">DateTable</span>
          </div>
          <div className="h-[30px] flex items-center">
            <ChevronDown size={13} strokeWidth={1.5} className="mr-[6px]" />
            {tableIcon}
            <span className="ml-[5px]">Sheet1</span>
          </div>
          {fields.map(([name, icon]) => (
            <div key={name} className="h-[30px] flex items-center pl-[37px] whitespace-nowrap">
              <span className="w-[15px] h-[15px] rounded-[3px] border border-[#605e5c] shrink-0" />
              <span className="w-[33px] flex justify-center shrink-0 pr-[3px]">{icon}</span>
              {name}
            </div>
          ))}
        </div>
        <div className="absolute right-[4px] top-[2px] w-[10px] h-[481px] bg-[#8a8886]" />
      </div>
    </div>
  )
}

function Emoji({ kind }: { kind: string }) {
  return (
    <svg width="24" height="24" viewBox="0 0 24 24" fill="none" className="shrink-0 mr-[11px]">
      {kind === 'chart' && (
        <>
          <rect x="1" y="1" width="22" height="22" rx="2" fill="#e4e4ea" />
          <rect x="3" y="7" width="4" height="15" fill="#9cd04e" />
          <rect x="10" y="13" width="4" height="9" fill="#ec3f7f" />
          <rect x="17" y="3" width="4" height="19" fill="#2b8fe0" />
        </>
      )}
      {kind === 'gem' && (
        <>
          <path d="M6 4h12l5 6-11 13L1 10z" fill="#3f8fe8" />
          <path d="M6 4h12l-3 6H9zM1 10h8l3 13z" fill="#7cc0f5" />
        </>
      )}
      {kind === 'pc' && (
        <>
          <rect x="1" y="1" width="22" height="15" fill="#5cb8ea" />
          <path d="M1 1h22L1 16z" fill="#8cd2f5" />
          <rect x="1" y="16" width="22" height="2" fill="#8a98a6" />
          <rect x="9" y="18" width="6" height="2" fill="#b0b8c0" />
          <rect x="4" y="20" width="16" height="3" fill="#bcc4cc" />
        </>
      )}
      {kind === 'money' && (
        <>
          <path d="M12 14l10 9-10-3-3-4z" fill="#dfe3e6" />
          <path d="M1 13L14 2l9 8-13 11z" fill="#3aa655" />
          <circle cx="12" cy="11.5" r="3.5" fill="#8fd6a0" />
          <path d="M6 7l10 11 3-3L9 4z" fill="#f2c230" />
        </>
      )}
    </svg>
  )
}

function Para({ lines }: { lines: ReactNode[] }) {
  return (
    <div className="mb-[18.8px]">
      {lines.map((l, i) => (
        <div key={i} className="h-[31px] leading-[31px] whitespace-nowrap flex items-center">
          {l}
        </div>
      ))}
    </div>
  )
}

function Canvas() {
  return (
    <div className="flex-1 bg-white border-r border-[#c8c6c4] flex flex-col min-h-0">
      <div className="h-[30px] flex justify-end pr-[8px] text-[#8a8886] text-[15px] font-bold tracking-[0.5px] leading-[18px]">...</div>
      <div className="ml-[30px] h-[724px] border-l border-t border-b border-[#e8e8e8] pl-[4px] pt-[5px] text-[22px] text-[#252423] tracking-[-0.038em]">
        <Para
          lines={[
            'Slide 3: Monetization Performance',
            'Revenue Trends & Platform Insights',
            'Revenue Trends',
            'March leads with ₹42,702 in revenue. Possible seasonal trend or effective promotions—worth replicating.',
          ]}
        />
        <Para lines={['Top Revenue Users', 'Significant share from top 10 users.']} />
        <Para lines={['Example: User kathleen32 contributed ₹429 and 17 TPS. Valuable for VIP retention programs.']} />
        <Para
          lines={[
            'Device Distribution',
            <span className="tracking-[-0.029em]">Evenly split: PC (33.62%), Mobile (33.42%), Console (32.96%). Indicates cross-platform appeal.</span>,
          ]}
        />
        <Para lines={['ARPU', 'At ₹50.17, ARPU is healthy. Benchmarking this could unlock further monetization opportunities.']} />
        <div className="h-[31px] leading-[31px]">Recommendations</div>
        {[
          ['chart', 'Replicate peak months — Study March’s success factors.'],
          ['gem', 'Loyalty programs — Provide exclusive perks for top spenders.'],
          ['pc', 'Device optimization — Enhance UX across platforms and test platform-specific promotions.'],
          ['money', 'Expand revenue streams — Offer bundles, subscriptions, and tailored pricing strategies.'],
        ].map(([k, t]) => (
          <div key={k} className={`h-[31px] mb-[18.8px] flex items-center pl-[3px] whitespace-nowrap ${k === 'pc' ? 'tracking-[-0.034em]' : ''}`}>
            <Emoji kind={k} />
            {t}
          </div>
        ))}
      </div>
      <div className="flex-1 border-b-[2px] border-dotted border-[#555] mb-[18px]" />
    </div>
  )
}

function FiltersPane() {
  return (
    <div className="w-[41px] shrink-0 bg-white flex flex-col items-center pt-[15px] text-[#252423]">
      <ChevronsLeft size={15} className="ml-[1px]" />
      <svg width="12" height="14" viewBox="0 0 12 14" fill="none" stroke="#444" strokeWidth="1.3" className="mt-[22px] ml-[6px]">
        <path d="M2 6v4M6 3v8M10 1v12" />
      </svg>
      <div className="mt-[11px] [writing-mode:vertical-rl] text-[18px] font-semibold leading-[20px]">Filters</div>
    </div>
  )
}

function PageTabs() {
  const tabs: [string, number][] = [
    ['Engagement Patterns', 192],
    ['Monetization Performance', 226],
    ['Churn & Retention Risk', 206],
    ['Insights 1', 114],
    ['Insights 2', 114],
    ['Insights 3', 117],
    ['Insights 4', 113],
  ]
  return (
    <div className="h-[44px] flex bg-white text-[14px] text-[#252423] shrink-0">
      <div className="w-[160px] flex items-start pt-[5px] relative">
        <svg width="22" height="24" viewBox="0 0 22 24" fill="none" stroke="#333" strokeWidth="1.5" className="ml-[17px]">
          <rect x="2" y="2" width="18" height="15" rx="2" />
          <path d="M11 17v3M6 21h10" />
        </svg>
        <div className="absolute left-[13px] bottom-[5px] w-[30px] h-[4px] rounded-full bg-[#117865]" />
        <svg width="14" height="26" viewBox="0 0 14 26" fill="none" stroke="#333" strokeWidth="1.5" className="ml-[36px] -mt-[2px]">
          <rect x="1" y="1" width="12" height="24" rx="2" />
          <path d="M5 21h4" />
        </svg>
        <svg width="8" height="12" viewBox="0 0 8 12" fill="none" stroke="#777" className="ml-[28px] mt-[5px]">
          <path d="M6 1L1 6l5 5z" />
        </svg>
        <svg width="8" height="12" viewBox="0 0 8 12" fill="none" stroke="#777" className="ml-[19px] mt-[5px]">
          <path d="M2 1l5 5-5 5z" />
        </svg>
      </div>
      <div className="w-[126px] border-l border-[#c8c6c4] pl-[4px] leading-[46px] whitespace-nowrap">User Overview</div>
      {tabs.map(([t, w]) => (
        <div
          key={t}
          style={{ width: w }}
          className={`relative border-l border-[#c8c6c4] text-center leading-[46px] whitespace-nowrap ${t === 'Insights 3' ? 'border-r' : ''}`}
        >
          {t}
          {t === 'Insights 3' && (
            <>
              <span className="absolute right-[3px] top-[2px] leading-[20px] text-[13px] font-semibold">x</span>
              <div className="absolute left-0 right-0 bottom-0 h-[5px] bg-[#117865]" />
            </>
          )}
        </div>
      ))}
      <div className="w-[49px] bg-[#117865] flex items-center justify-center text-white">
        <svg width="16" height="16" viewBox="0 0 16 16" stroke="#fff" strokeWidth="3.5">
          <path d="M8 1v14M1 8h14" />
        </svg>
      </div>
    </div>
  )
}

function StatusBar() {
  return (
    <div className="h-[28px] border-t-[2px] border-[#d8d8d8] flex items-center text-[14px] text-[#323130] shrink-0">
      <span className="whitespace-nowrap">Page 7 of 8</span>
      <div className="ml-auto flex items-center pr-[22px]">
        <span className="w-[4px] h-[2px] bg-[#444]" />
        <div className="ml-[6px] w-[125px] h-[1px] bg-[#444] relative">
          <span className="absolute left-[50px] -top-[7px] w-[4px] h-[15px] bg-[#444]" />
          <span className="absolute left-[62px] -top-[3px] w-[1px] h-[7px] bg-[#444]" />
        </div>
        <span className="ml-[7px] text-[18px] leading-none font-semibold text-[#444]">+</span>
        <span className="ml-[15px] whitespace-nowrap">86%</span>
        <svg width="18" height="15" viewBox="0 0 18 15" fill="none" stroke="#444" strokeWidth="1.2" className="ml-[26px]">
          <rect x="1" y="1" width="16" height="13" rx="2" />
          <path d="M6 4H4v2M12 4h2v2M6 11H4V9M12 11h2V9" stroke="#2b88d8" />
        </svg>
      </div>
    </div>
  )
}

export default function App() {
  return (
    <div className="w-[1912px] h-[1028px] bg-[#f3f3f3] flex flex-col overflow-hidden font-['Noto_Sans',sans-serif]">
      <TopBar />
      <Ribbon />
      <div className="flex-1 flex min-h-0">
        <Rail />
        <div className="w-[1417px] shrink-0 flex flex-col">
          <div className="flex-1 flex min-h-0">
            <Canvas />
            <FiltersPane />
          </div>
          <PageTabs />
        </div>
        <VizPane />
        <DataPane />
      </div>
      <StatusBar />
    </div>
  )
}
